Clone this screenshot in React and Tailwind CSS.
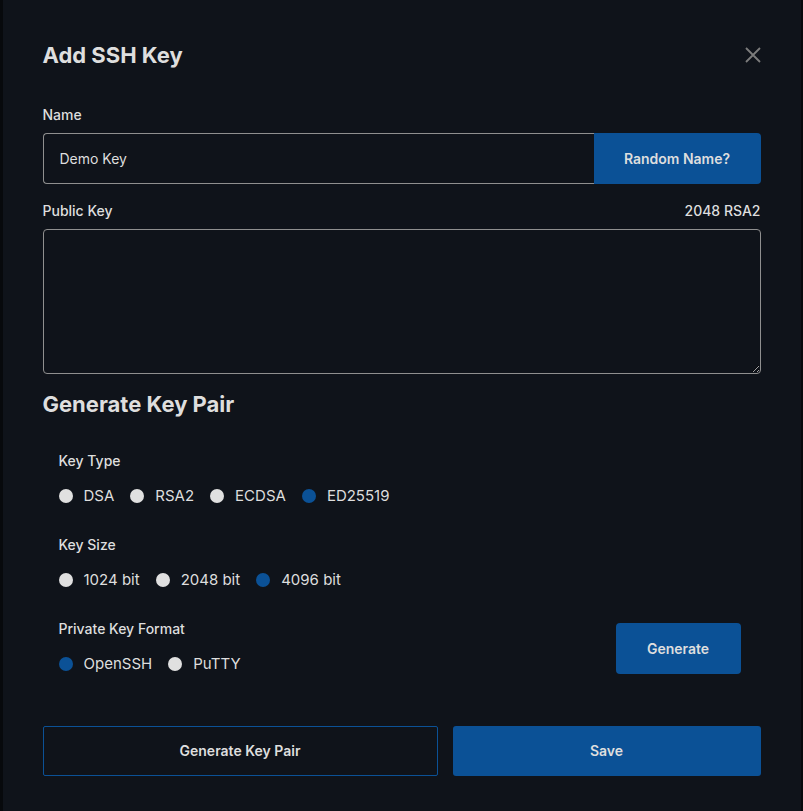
import React, { useState } from "react";

const Radio = ({ label, checked, onClick }) => (
	<label onClick={onClick} className="flex items-center gap-[11px] cursor-pointer">
		<span
			className={
				"w-[14px] h-[14px] rounded-full " +
				(checked ? "bg-[#0b5196]" : "bg-[#e0e0e0]")
			}
		></span>
		<span className="text-[15px] leading-5">{label}</span>
	</label>
);

const RadioGroup = ({ title, options, value, onChange }) => (
	<div>
		<div className="text-sm leading-5 font-medium">{title}</div>
		<div className="flex items-center gap-4 mt-[15px]">
			{options.map((opt) => (
				<Radio
					key={opt}
					label={opt}
					checked={value === opt}
					onClick={() => onChange(opt)}
				/>
			))}
		</div>
	</div>
);

const App = () => {
	const [keyType, setKeyType] = useState("ED25519");
	const [keySize, setKeySize] = useState("4096 bit");
	const [format, setFormat] = useState("OpenSSH");

	return (
		<div
			className="min-h-screen bg-[#07090c] flex justify-center"
			style={{ fontFamily: "Inter, 'Noto Sans', sans-serif" }}
		>
			<div className="w-[798px] min-h-[811px] bg-[#0f131a] text-[#dedede] px-10 pt-[41px] pb-9">
				<div className="flex items-center justify-between">
					<h1 className="text-[22px] leading-7 font-bold">Add SSH Key</h1>
					<button className="text-[#7c7c7c] -mr-px">
						<svg width="18" height="18" viewBox="0 0 18 18" fill="none">
							<path
								d="M2 2L16 16M16 2L2 16"
								stroke="currentColor"
								strokeWidth="1.8"
							/>
						</svg>
					</button>
				</div>

				<div className="mt-9 text-sm leading-5 font-medium">Name</div>
				<div className="mt-2 flex h-[51px]">
					<div className="flex-1 border border-[#8f8f8f] border-r-0 rounded-l-[4px] flex items-center px-4 text-sm">
						Demo Key
					</div>
					<button className="w-[167px] bg-[#0b5196] rounded-r-[4px] text-sm font-semibold">
						Random Name?
					</button>
				</div>

				<div className="mt-[17px] flex justify-between text-sm leading-5 font-medium">
					<span>Public Key</span>
					<span>2048 RSA2</span>
				</div>
				<textarea className="mt-2 block w-full h-[145px] bg-transparent border border-[#8f8f8f] rounded-[4px] p-3 text-sm outline-none"></textarea>

				<h2 className="mt-[16px] text-[22px] leading-7 font-bold">
					Generate Key Pair
				</h2>

				<div className="pl-4 pr-5 mt-[33px] flex flex-col gap-[29px]">
					<RadioGroup
						title="Key Type"
						options={["DSA", "RSA2", "ECDSA", "ED25519"]}
						value={keyType}
						onChange={setKeyType}
					/>
					<RadioGroup
						title="Key Size"
						options={["1024 bit", "2048 bit", "4096 bit"]}
						value={keySize}
						onChange={setKeySize}
					/>
					<div className="flex items-end justify-between">
						<RadioGroup
							title="Private Key Format"
							options={["OpenSSH", "PuTTY"]}
							value={format}
							onChange={setFormat}
						/>
						<button className="w-[125px] h-[51px] bg-[#0b5196] rounded-[4px] text-sm font-semibold">
							Generate
						</button>
					</div>
				</div>

				<div className="mt-[52px] flex gap-[15px] h-[50px]">
					<button className="w-[395px] border border-[#0b5196] rounded-[2px] text-sm font-semibold">
						Generate Key Pair
					</button>
					<button className="flex-1 bg-[#0b5196] rounded-[3px] text-sm font-semibold">
						Save
					</button>
				</div>
			</div>
		</div>
	);
};

export default App;
